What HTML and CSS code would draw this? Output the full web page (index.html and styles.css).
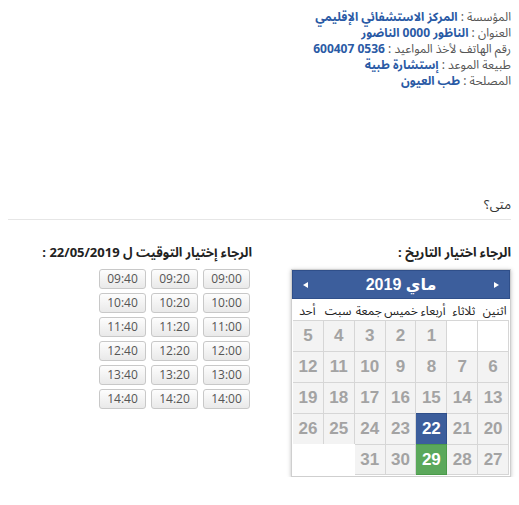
FILE: index.html
```html
<!DOCTYPE html>
<html lang="ar" dir="rtl">
<head>
<meta charset="utf-8">
<link rel="stylesheet" href="styles.css">
</head>
<body>
<div class="info">
  <div class="line"><span class="lbl">المؤسسة :</span> <span class="val">المركز الاستشفائي الإقليمي</span></div>
  <div class="line"><span class="lbl">العنوان :</span> <span class="val">الناظور 0000 الناضور</span></div>
  <div class="line"><span class="lbl">رقم الهاتف لأخذ المواعيد :</span> <span class="val">0536 600407</span></div>
  <div class="line"><span class="lbl">طبيعة الموعد :</span> <span class="val">إستشارة طبية</span></div>
  <div class="line"><span class="lbl">المصلحة :</span> <span class="val">طب العيون</span></div>
</div>

<h2 class="when">متى؟</h2>

<div class="cols">
  <div class="col col-date">
    <div class="col-title">الرجاء اختيار التاريخ :</div>
    <div class="cal">
      <div class="cal-head">
        <span class="arrow prev"></span>
        <span class="cal-title">ماي 2019</span>
        <span class="arrow next"></span>
      </div>
      <div class="days">
        <span>اثنين</span><span>ثلاثاء</span><span>أربعاء</span><span>خميس</span><span>جمعة</span><span>سبت</span><span>أحد</span>
      </div>
      <div class="grid">
        <span class="c empty"></span><span class="c empty"></span><span class="c">1</span><span class="c">2</span><span class="c">3</span><span class="c">4</span><span class="c">5</span>
        <span class="c">6</span><span class="c">7</span><span class="c">8</span><span class="c">9</span><span class="c">10</span><span class="c">11</span><span class="c">12</span>
        <span class="c">13</span><span class="c">14</span><span class="c">15</span><span class="c">16</span><span class="c">17</span><span class="c">18</span><span class="c">19</span>
        <span class="c">20</span><span class="c">21</span><span class="c sel">22</span><span class="c">23</span><span class="c">24</span><span class="c">25</span><span class="c">26</span>
        <span class="c">27</span><span class="c">28</span><span class="c today">29</span><span class="c">30</span><span class="c">31</span><span class="c blank"></span><span class="c blank"></span>
      </div>
    </div>
  </div>
  <div class="col col-time">
    <div class="col-title">الرجاء إختيار التوقيت ل 22/05/2019 :</div>
    <div class="times">
      <button class="t">09:00</button><button class="t">09:20</button><button class="t">09:40</button>
      <button class="t">10:00</button><button class="t">10:20</button><button class="t">10:40</button>
      <button class="t">11:00</button><button class="t">11:20</button><button class="t">11:40</button>
      <button class="t">12:00</button><button class="t">12:20</button><button class="t">12:40</button>
      <button class="t">13:00</button><button class="t">13:20</button><button class="t">13:40</button>
      <button class="t">14:00</button><button class="t">14:20</button><button class="t">14:40</button>
    </div>
  </div>
</div>
</body>
</html>
```
FILE: styles.css
```css
html, body {
  margin: 0;
  padding: 0;
  background: #fff;
}
body {
  padding: 0 8px;
  font-family: "Noto Sans Arabic", "DejaVu Sans", "Noto Sans", sans-serif;
  color: #333;
}
.info {
  padding-top: 10px;
  font-size: 12px;
  line-height: 16px;
}
.line {
  height: 16px;
  overflow: visible;
}
.lbl, .val {
  display: inline-block;
  height: 16px;
  line-height: 16px;
  vertical-align: top;
}
.lbl { color: #555; }
.val { color: #2a5aa5; font-weight: bold; }
.when {
  margin: 105px 0 0;
  font-size: 13px;
  font-weight: normal;
  color: #333;
  line-height: 20px;
  padding-bottom: 4px;
  border-bottom: 1px solid #e6e6e6;
}
.cols {
  display: grid;
  grid-template-columns: 252px 1fr;
  margin-top: 23px;
}
.col-title {
  font-size: 13px;
  font-weight: bold;
  color: #222;
  line-height: 20px;
}
.col-time .col-title { padding-right: 7px; }
.cal {
  width: 218px;
  margin-top: 6px;
  border: 1px solid #cfcfcf;
  box-shadow: 0 1px 4px rgba(0,0,0,0.25);
  background: #fff;
}
.cal-head {
  height: 27px;
  background: #3c5e9c;
  border: 1px solid #2f4f8a;
  display: flex;
  align-items: center;
  justify-content: space-between;
  padding: 0 10px;
}
.cal-title {
  color: #fff;
  font-family: "Liberation Sans", "DejaVu Sans", sans-serif;
  font-weight: bold;
  font-size: 16px;
}
.arrow {
  width: 0;
  height: 0;
  border-top: 3px solid transparent;
  border-bottom: 3px solid transparent;
}
.prev { border-left: 5px solid #fff; }
.next { border-right: 5px solid #fff; }
.days {
  display: grid;
  grid-template-columns: repeat(7, 1fr);
  height: 21px;
  align-items: center;
  font-size: 12px;
  color: #222;
  text-align: center;
}
.grid {
  display: grid;
  grid-template-columns: repeat(7, 1fr);
  grid-auto-rows: 31px;
  padding: 0 1px 1px;
}
.c {
  margin: 0;
  border: 1px solid #d6d6d6;
  border-width: 1px 1px 0 0;
  background: #f3f3f3;
  color: #a3a3a3;
  font-family: "Liberation Sans", "DejaVu Sans", sans-serif;
  font-weight: bold;
  font-size: 17px;
  display: flex;
  align-items: center;
  justify-content: center;
}
.grid .c:nth-child(7n+1) { border-right-width: 1px; }
.grid .c:nth-last-child(-n+7) { border-bottom-width: 1px; }
.c.empty { background: #fff; }
.c.blank { background: #fff; border-color: #fff; border-bottom-color: #fff; }
.c.sel { background: #3c5e9c; color: #fff; border-color: #2f4f8a; }
.c.today { background: #5ba85b; color: #fff; border-color: #4a9a4a; }
.times {
  display: grid;
  grid-template-columns: repeat(3, 47px);
  column-gap: 5px;
  row-gap: 4px;
  margin-top: 6px;
  padding-right: 9px;
}
.t {
  height: 20px;
  padding: 0;
  margin: 0;
  border: 1px solid #c8c8c8;
  border-radius: 3px;
  background: linear-gradient(#fdfdfd, #e9e9e9);
  color: #555;
  font-family: "Open Sans", "Noto Sans", sans-serif;
  font-size: 12px;
  line-height: 18px;
  text-align: center;
}
```
